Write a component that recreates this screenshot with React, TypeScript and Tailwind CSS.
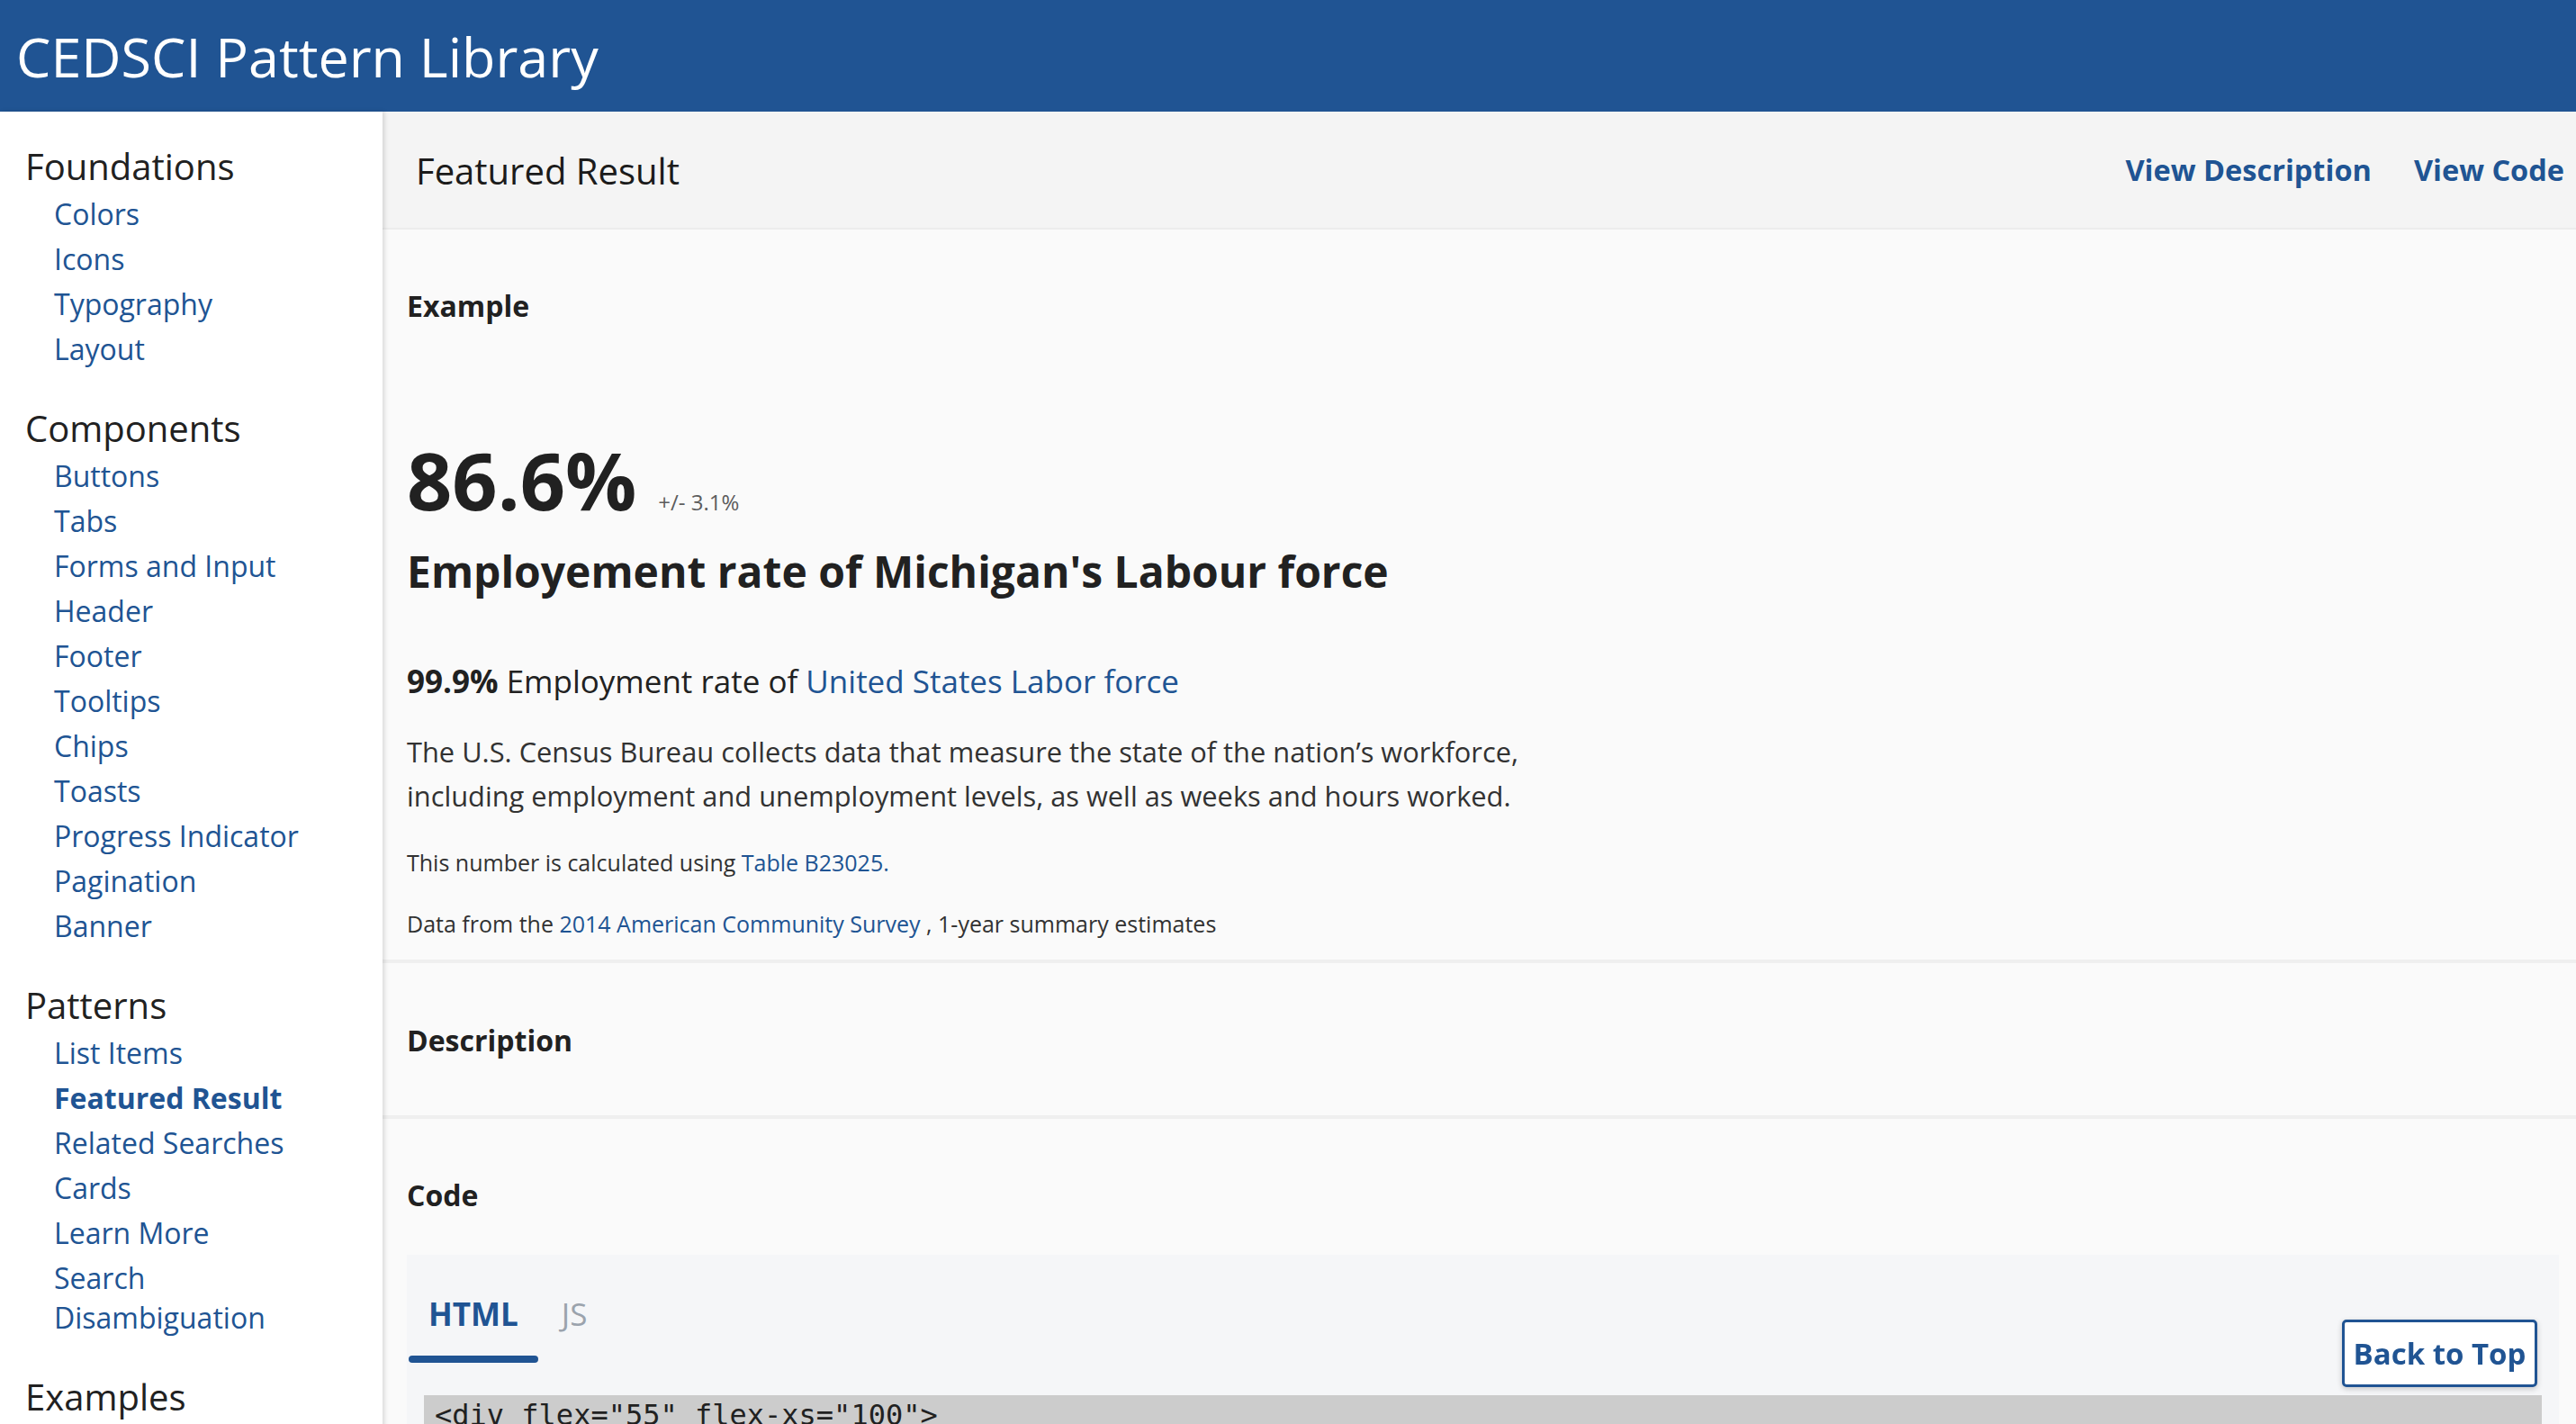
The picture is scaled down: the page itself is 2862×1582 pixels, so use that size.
import React from 'react';

const nav = [
  { title: 'Foundations', items: ['Colors', 'Icons', 'Typography', 'Layout'] },
  {
    title: 'Components',
    items: ['Buttons', 'Tabs', 'Forms and Input', 'Header', 'Footer', 'Tooltips', 'Chips', 'Toasts', 'Progress Indicator', 'Pagination', 'Banner'],
  },
  { title: 'Patterns', items: ['List Items', 'Featured Result', 'Related Searches', 'Cards', 'Learn More', 'Search Disambiguation'] },
  { title: 'Examples', items: [] as string[] },
];

const codeLines = [
  '<div flex="55" flex-xs="100">',
  '  <div class="featured-result">',
  '    <h1 class="featured-result__value">86.6%</h1>',
  '  </div>',
  '</div>',
];

function Sidebar() {
  return (
    <aside className="relative z-10 w-[425px] shrink-0 bg-white pt-[33px] pl-[28px] pr-[40px] shadow-[2px_0_5px_rgba(0,0,0,0.14)]">
      {nav.map((section) => (
        <div key={section.title} className="mb-[35px]">
          <h2 className="text-[40px] leading-[56px] text-[#212121]">{section.title}</h2>
          <ul className="pl-[32px]">
            {section.items.map((item) => (
              <li key={item} className="py-[3px]">
                <a
                  href="#"
                  className={
                    item === 'Featured Result'
                      ? 'text-[32px] leading-[44px] font-bold text-[#205493]'
                      : 'text-[32px] leading-[44px] text-[#205493]'
                  }
                >
                  {item}
                </a>
              </li>
            ))}
          </ul>
        </div>
      ))}
    </aside>
  );
}

export default function App() {
  return (
    <div className="min-h-screen bg-[#fafafa] font-['Open_Sans',sans-serif]">
      {/* Header */}
      <header className="flex h-[124px] items-center bg-[#205493] pl-[18px]">
        <h1 className="text-[61px] leading-none text-white">CEDSCI Pattern Library</h1>
      </header>

      <div className="flex">
        <Sidebar />

        <main className="min-w-0 flex-1 bg-[#fafafa]">
          {/* Title bar */}
          <div className="flex h-[131px] items-center justify-between border-b-2 border-[#ececec] bg-[#f4f4f4] pt-[2px] pl-[37px] pr-[13px]">
            <h2 className="text-[40px] text-[#1b1b1b]">Featured Result</h2>
            <div className="flex gap-[47px]">
              <a href="#" className="text-[32.5px] font-bold text-[#205493]">View Description</a>
              <a href="#" className="text-[32.5px] font-bold text-[#205493]">View Code</a>
            </div>
          </div>

          {/* Example */}
          <section className="pl-[27px] pr-[20px] pt-[61px] pb-[21px]">
            <h3 className="text-[32px] leading-[48px] font-bold text-[#212121]">Example</h3>

            <div className="mt-[125px] flex items-baseline gap-[24px]">
              <span className="text-[88px] leading-[88px] font-bold text-[#212121]">86.6%</span>
              <span className="text-[24px] text-[#5c5c5c]">+/- 3.1%</span>
            </div>
            <h4 className="mt-[30px] text-[48px] leading-[56px] font-bold text-[#212121]">
              Employement rate of Michigan's Labour force
            </h4>

            <p className="mt-[69px] text-[35px] leading-[50px] text-[#212121]">
              <span className="font-bold">99.9%</span> Employment rate of{' '}
              <a href="#" className="text-[#205493]">United States Labor force</a>
            </p>

            <p className="mt-[29px] max-w-[1260px] text-[30.8px] leading-[49px] text-[#323232]">
              The U.S. Census Bureau collects data that measure the state of the nation’s workforce, including
              employment and unemployment levels, as well as weeks and hours worked.
            </p>

            <p className="mt-[30px] text-[25px] leading-[38px] text-[#323232]">
              This number is calculated using <a href="#" className="text-[#205493]">Table B23025.</a>
            </p>
            <p className="mt-[30px] text-[25px] leading-[38px] text-[#323232]">
              Data from the <a href="#" className="text-[#205493]">2014 American Community Survey</a> , 1-year summary
              estimates
            </p>
          </section>

          <div className="h-[4px] bg-[#efefef]" />

          {/* Description */}
          <section className="pl-[27px] pr-[20px] pt-[62px] pb-[59px]">
            <h3 className="text-[32px] leading-[48px] font-bold text-[#212121]">Description</h3>
          </section>

          <div className="h-[4px] bg-[#efefef]" />

          {/* Code */}
          <section className="pl-[27px] pr-[19px] pt-[61px] pb-[60px]">
            <h3 className="text-[32px] leading-[48px] font-bold text-[#212121]">Code</h3>

            <div className="mt-[42px] bg-[#f5f6f8] pt-[41px] pb-[40px]">
              <div className="flex gap-[4px] pl-[2px]">
                <div className="flex flex-col">
                  <span className="px-[22px] text-[35px] leading-[50px] font-bold text-[#205493]">HTML</span>
                  <span className="mt-[21px] h-[8px] rounded-full bg-[#205493]" />
                </div>
                <div className="flex flex-col">
                  <span className="px-[22px] text-[35px] leading-[50px] text-[#9ba3ad]">JS</span>
                </div>
              </div>

              <pre className="mx-[19px] mt-[36px] bg-[#cccccc] px-[12px] pt-[2px] pb-[16px] font-['DejaVu_Sans_Mono',monospace] text-[32px] leading-[40px] text-[#212121]">
                {codeLines.join('\n')}
              </pre>
            </div>
          </section>
        </main>
      </div>

      {/* Back to top */}
      <button className="fixed right-[43px] bottom-[41px] h-[75px] w-[217px] rounded-[5px] border-[3px] border-[#205493] bg-white text-[33px] font-bold text-[#205493] shadow-[0_2px_6px_rgba(0,0,0,0.2)]">
        Back to Top
      </button>
    </div>
  );
}
